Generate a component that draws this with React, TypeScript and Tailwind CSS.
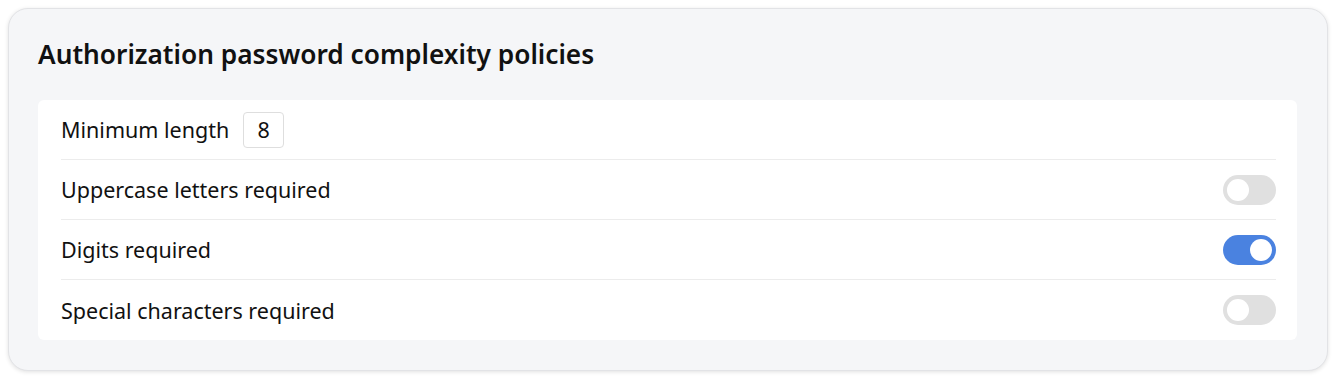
import { useState } from "react";

const Toggle = ({ on, onClick }: { on: boolean; onClick: () => void }) => (
  <button
    type="button"
    onClick={onClick}
    className={`relative flex h-[30px] w-[53px] items-center rounded-full px-[4px] ${
      on ? "justify-end bg-[#4a82e0]" : "justify-start bg-[#e0e0e0]"
    }`}
  >
    <span className="block h-[22px] w-[22px] rounded-full bg-white" />
  </button>
);

export default function App() {
  const [upper, setUpper] = useState(false);
  const [digits, setDigits] = useState(true);
  const [special, setSpecial] = useState(false);

  const rows = [
    { label: "Uppercase letters required", on: upper, set: () => setUpper((p) => !p) },
    { label: "Digits required", on: digits, set: () => setDigits((p) => !p) },
    { label: "Special characters required", on: special, set: () => setSpecial((p) => !p) },
  ];

  return (
    <div className="bg-white p-[8px] font-['Noto_Sans',sans-serif] text-[#111]">
      <div className="rounded-[20px] border border-[#e2e3e6] bg-[#f5f6f8] pb-[30px] pl-[29px] pr-[30px] pt-[30px] shadow-[0_1px_4px_rgba(0,0,0,0.12)]">
        <h1 className="mb-[30px] text-[26.25px] font-semibold leading-[31px]">
          Authorization password complexity policies
        </h1>
        <div className="rounded-[6px] bg-white pl-[23px] pr-[21px]">
          <div className="flex h-[60px] items-center border-b border-[#ececec]">
            <span className="pt-[2px] text-[21.5px]">Minimum length</span>
            <div className="ml-[14px] flex h-[36px] w-[41px] items-center justify-center rounded-[4px] border border-[#dedede] pt-[2px] text-[21.5px]">
              8
            </div>
          </div>
          {rows.map((r, i) => (
            <div
              key={r.label}
              className={`flex h-[60px] items-center justify-between ${
                i < rows.length - 1 ? "border-b border-[#ececec]" : ""
              }`}
            >
              <span className="pt-[2px] text-[21.5px]">{r.label}</span>
              <Toggle on={r.on} onClick={r.set} />
            </div>
          ))}
        </div>
      </div>
    </div>
  );
}
